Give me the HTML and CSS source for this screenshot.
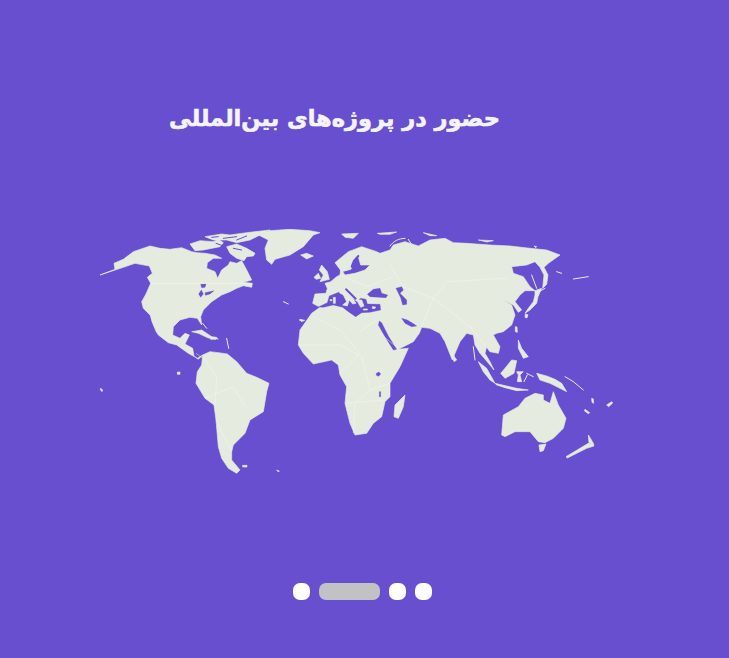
FILE: index.html
```html
<!DOCTYPE html>
<html lang="fa">
<head>
<meta charset="utf-8">
<title>حضور در پروژه‌های بین‌المللی</title>
<link rel="stylesheet" href="styles.css">
</head>
<body>
<main class="slide">
  <h1 class="slide-title" dir="rtl">حضور در پروژه‌های بین‌المللی</h1>
  <svg class="world-map" viewBox="90 220 560 265" width="560" height="265" aria-label="نقشه جهان" role="img">
    <g transform="translate(90 220) scale(.33333)">
      <path class="land" d="M30 165L75 148 72 130 100 118 130 95 180 78 210 85 240 88 275 83 305 95 320 98 345 100 375 105 395 115 370 115 352 128 350 145 375 155 383 175 395 150 415 135 420 125 440 130 455 122 470 150 485 180 460 187 487 190 485 202 460 197 440 205 420 215 395 225 365 245 340 270 332 290 335 315 322 295 300 292 270 300 250 320 248 345 270 355 285 340 298 345 285 372 308 385 312 408 325 418 338 405 322 415 295 400 260 375 235 368 205 345 190 322 180 285 160 265 155 245 168 222 182 190 172 172 187 160 178 138 135 130 100 142Z"/>
      <path class="sea" d="M178 285L184 305 196 332 186 322 176 300Z"/>
      <path class="sea" d="M332 193L348 192 345 202 335 203ZM326 222L334 210 340 222 332 232ZM345 218L372 212 360 222 346 226Z"/>
      <path class="land" d="M300 72L330 62 370 65 385 58 400 68 390 80 340 90 315 92ZM410 80L440 72 470 85 495 100 490 108 470 110 462 122 440 115 420 100ZM345 50L395 42 420 45 470 38 540 30 510 45 480 60 440 68 410 60 370 60Z"/>
      <path class="land" d="M500 42L540 32 600 28 660 32 690 38 670 45 640 80 600 105 555 118 545 133 530 120 525 85 535 60Z"/>
      <path class="land" d="M632 105L650 100 670 108 650 117ZM305 335L335 330 365 350 385 357 355 354 325 340ZM360 350L380 352 378 358 362 358Z"/>
      <path class="sea-line thin" d="M365 52L385 50M400 55L440 50M378 70L395 76M430 85L455 90M440 60L470 48"/>
      <path class="land-line" d="M338 310L350 325M410 355L416 385M580 245L595 252M628 300L640 302"/>
      <path class="land" d="M338 405L360 395 385 398 412 402 440 425 470 460 500 472 537 490 530 515 520 575 480 600 465 640 430 675 425 695 425 720 450 750 440 760 415 745 395 715 385 680 378 600 372 555 345 535 318 490 322 455 335 435Z"/>
      <path class="land" d="M262 456h8v7h-8ZM458 736h13v5h-13ZM32 505l6 5-2 5-5-6ZM560 750l8 3-3 3Z"/>
      <path class="border" d="M182 190H470M318 400L345 420 380 470 375 560M345 535L430 500 465 560M425 695L378 600"/>
    </g>
    <g transform="translate(290 220) scale(.33333)">
      <path class="land" d="M68 250L75 222 108 220 112 205 105 190 122 185 140 170 150 165 152 146 165 165 195 160 225 150 240 135 212 135 205 110 190 125 183 148 168 152 155 155 135 128 175 95 215 80 260 95 270 100 300 90 310 75 345 65 385 78 420 60 465 55 490 68 530 70 600 75 660 78 720 85 770 90 810 105 775 130 762 142 774 165 770 193 758 205 762 165 750 142 735 125 710 135 665 140 670 160 700 170 720 200 735 212 705 212 690 225 675 245 695 270 685 277 670 255 640 240 665 255 675 285 665 315 640 335 620 340 610 345 630 380 625 400 600 395 590 380 585 400 600 425 612 450 600 435 570 400 555 375 550 345 530 340 510 365 495 400 487 420 465 365 450 340 420 325 395 322 388 340 370 365 325 388 355 385 330 440 300 490 300 530 285 545 275 590 250 610 230 640 195 645 180 610 165 550 170 500 150 465 145 435 125 420 70 432 40 400 25 375 30 330 65 280 90 262Z"/>
      <path class="sea" d="M85 261L112 248 118 228 150 215 175 225 200 245 212 235 228 238 232 252 270 253 272 270 240 277 215 278 197 290 175 275 158 262 130 255 100 262Z"/>
      <path class="sea" d="M232 223L250 208 270 205 275 220 293 225 288 233 240 230ZM318 205L335 200 340 210 330 220 350 240 350 253 338 255 332 233ZM335 295L345 310 365 320 380 318 372 312 352 300ZM268 303L275 308 295 348 320 388 310 390 285 350 265 315Z"/>
      <path class="sea-line" d="M168 208L197 236M205 108L192 122 185 140"/>
      <path class="sea" d="M259 460l8-4 5 6-6 7-7-3ZM268 515h4v15h-4Z"/>
      <path class="land" d="M150 208L165 212 190 238 198 250 188 252 178 240 172 258 158 255 170 245 160 225 148 218ZM200 240L212 262 222 258 215 240ZM130 232h6v18h-6ZM247 260l10 1-3 5-7-1ZM220 267h12v3h-12ZM120 239h6v3h-6Z"/>
      <path class="land" d="M95 135L112 155 118 178 90 185 100 165 88 150ZM72 172L85 160 92 175 78 178ZM155 42L205 40 190 55 165 52ZM262 40L320 36 300 43 270 43ZM400 38L440 47 420 47ZM565 60L610 62 590 66ZM732 78l8 2-3 3ZM30 298l14 3-10 4Z"/>
      <path class="land-line" d="M300 78C312 62 325 56 345 55M355 58L380 98M765 205L742 218M725 165L740 205M850 177L895 170M800 155L815 160"/>
      <path class="land" d="M735 212L755 205 745 228 735 225ZM745 225L740 250 720 270 705 280 715 265 730 245 735 225ZM706 282l8 2-3 10-6-2ZM676 320l5 1 1 16-6-2ZM490 405l10 15-8 5-3-10ZM345 525L340 560 325 595 312 590 315 555Z"/>
      <path class="border" d="M70 290L150 330 210 400 150 460M210 335L260 300M30 375L150 375 215 410 240 510 195 550 190 640M240 510L300 490M170 550L280 540M300 135L340 200 430 235 470 185 650 175M430 235L395 320M430 235L540 320 600 395M150 165L230 200 310 170M330 390L270 340"/>
    </g>
    <g transform="translate(440 340) scale(.33333)">
      <path class="land" d="M115 65L140 85 165 130 150 120 130 95ZM165 130L200 138 230 145 265 150 230 152 195 143 170 135ZM182 100L195 85 215 60 230 62 222 100 195 115ZM230 95L250 95 240 105 245 125 232 125 235 105ZM235 0L245 25 265 50 250 55 235 25ZM290 100L320 108 345 118 365 130 380 155 360 145 330 130 300 120Z"/>
      <path class="land" d="M185 285L190 225 235 200 255 175 285 160 310 165 310 180 330 190 340 155 355 195 378 235 370 265 340 295 315 308 295 305 270 275 225 275 195 290ZM297 315L318 312 310 332 300 335ZM378 350L420 325 445 310 460 310 462 318 440 325 410 340 382 354ZM445 285L452 296 460 310 447 308Z"/>
      <path class="land" d="M435 208l14 10-4 3-12-9ZM500 195l15-10 3 4-12 11ZM455 175l5 2 1 13-5-3Z"/>
      <path class="land-line" d="M375 110L400 125 430 150M100 20L105 60M260 100L280 110M252 125L262 105"/>
    </g>
  </svg>
  <div class="pager">
    <span class="dot"></span>
    <span class="dot dot-active"></span>
    <span class="dot"></span>
    <span class="dot"></span>
  </div>
</main>
</body>
</html>
```
FILE: styles.css
```css
html, body {
  margin: 0;
  padding: 0;
  background: #684fcf;
}

.slide {
  display: flex;
  flex-direction: column;
  width: 729px;
  height: 658px;
  overflow: hidden;
  box-sizing: border-box;
  padding-top: 101px;
}

.slide-title {
  margin: 0;
  padding-right: 229px;
  height: 37px;
  font-family: "DejaVu Sans", sans-serif;
  font-size: 22.5px;
  font-weight: 700;
  line-height: 34px;
  color: #f4f4f6;
  text-align: right;
  -webkit-text-stroke: 0.6px #f4f4f6;
}

.world-map {
  display: block;
  margin: 82px 0 0 90px;
  flex: none;
  filter: blur(0.35px);
}

.land {
  fill: #e5ecdf;
  stroke: #e5ecdf;
  stroke-width: 2;
  stroke-linejoin: round;
}
.sea {
  fill: #684fcf;
  stroke: #684fcf;
  stroke-width: 1;
  stroke-linejoin: round;
}
.sea-line { fill: none; stroke: #684fcf; stroke-width: 6; stroke-linecap: round; stroke-linejoin: round; }
.thin { stroke-width: 3; }
.land-line { fill: none; stroke: #e5ecdf; stroke-width: 3; stroke-linecap: round; stroke-linejoin: round; }
.border { fill: none; stroke: #f2f6ee; stroke-width: 1.5; stroke-linejoin: round; }

.pager {
  display: flex;
  justify-content: center;
  gap: 9px;
  margin-top: 98px;
  padding-right: 5px;
}

.dot {
  width: 17px;
  height: 17px;
  border-radius: 7px;
  background: #ffffff;
}

.dot-active {
  width: 61px;
  background: #c2c2c4;
}
```
